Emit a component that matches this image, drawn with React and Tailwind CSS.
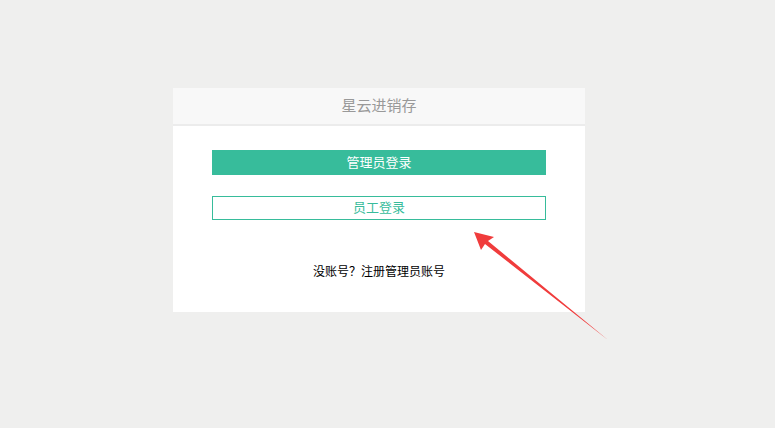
import React from "react";

export default function App() {
  return (
    <div
      className="relative min-h-screen w-full bg-[#efefee] pt-[88px]"
      style={{ fontFamily: '"Liberation Sans", "Noto Sans CJK SC", sans-serif' }}
    >
      <div className="ml-[173px] w-[412px] bg-white">
        <div className="flex h-[38px] items-center justify-center border-b-2 border-[#ececec] bg-[#f8f8f8] text-[15px] text-[#999]">
          星云进销存
        </div>
        <div className="px-[39px] pt-[24px] pb-[32px]">
          <button className="flex h-[25px] w-full items-center justify-center bg-[#37bc9b] text-[13px] text-white">
            管理员登录
          </button>
          <button className="mt-[21px] flex h-[24px] w-full items-center justify-center border border-[#37bc9b] bg-white text-[13px] text-[#37bc9b]">
            员工登录
          </button>
          <div className="mt-[44px] text-center text-[12px] leading-[16px] text-black">
            没账号？注册管理员账号
          </div>
        </div>
      </div>
      <svg
        className="pointer-events-none absolute left-0 top-0"
        width="775"
        height="428"
        viewBox="0 0 775 428"
      >
        <polygon
          points="474,232 494,237 488,241 608,340 485,244 481,250"
          fill="#f03c3c"
        />
      </svg>
    </div>
  );
}
